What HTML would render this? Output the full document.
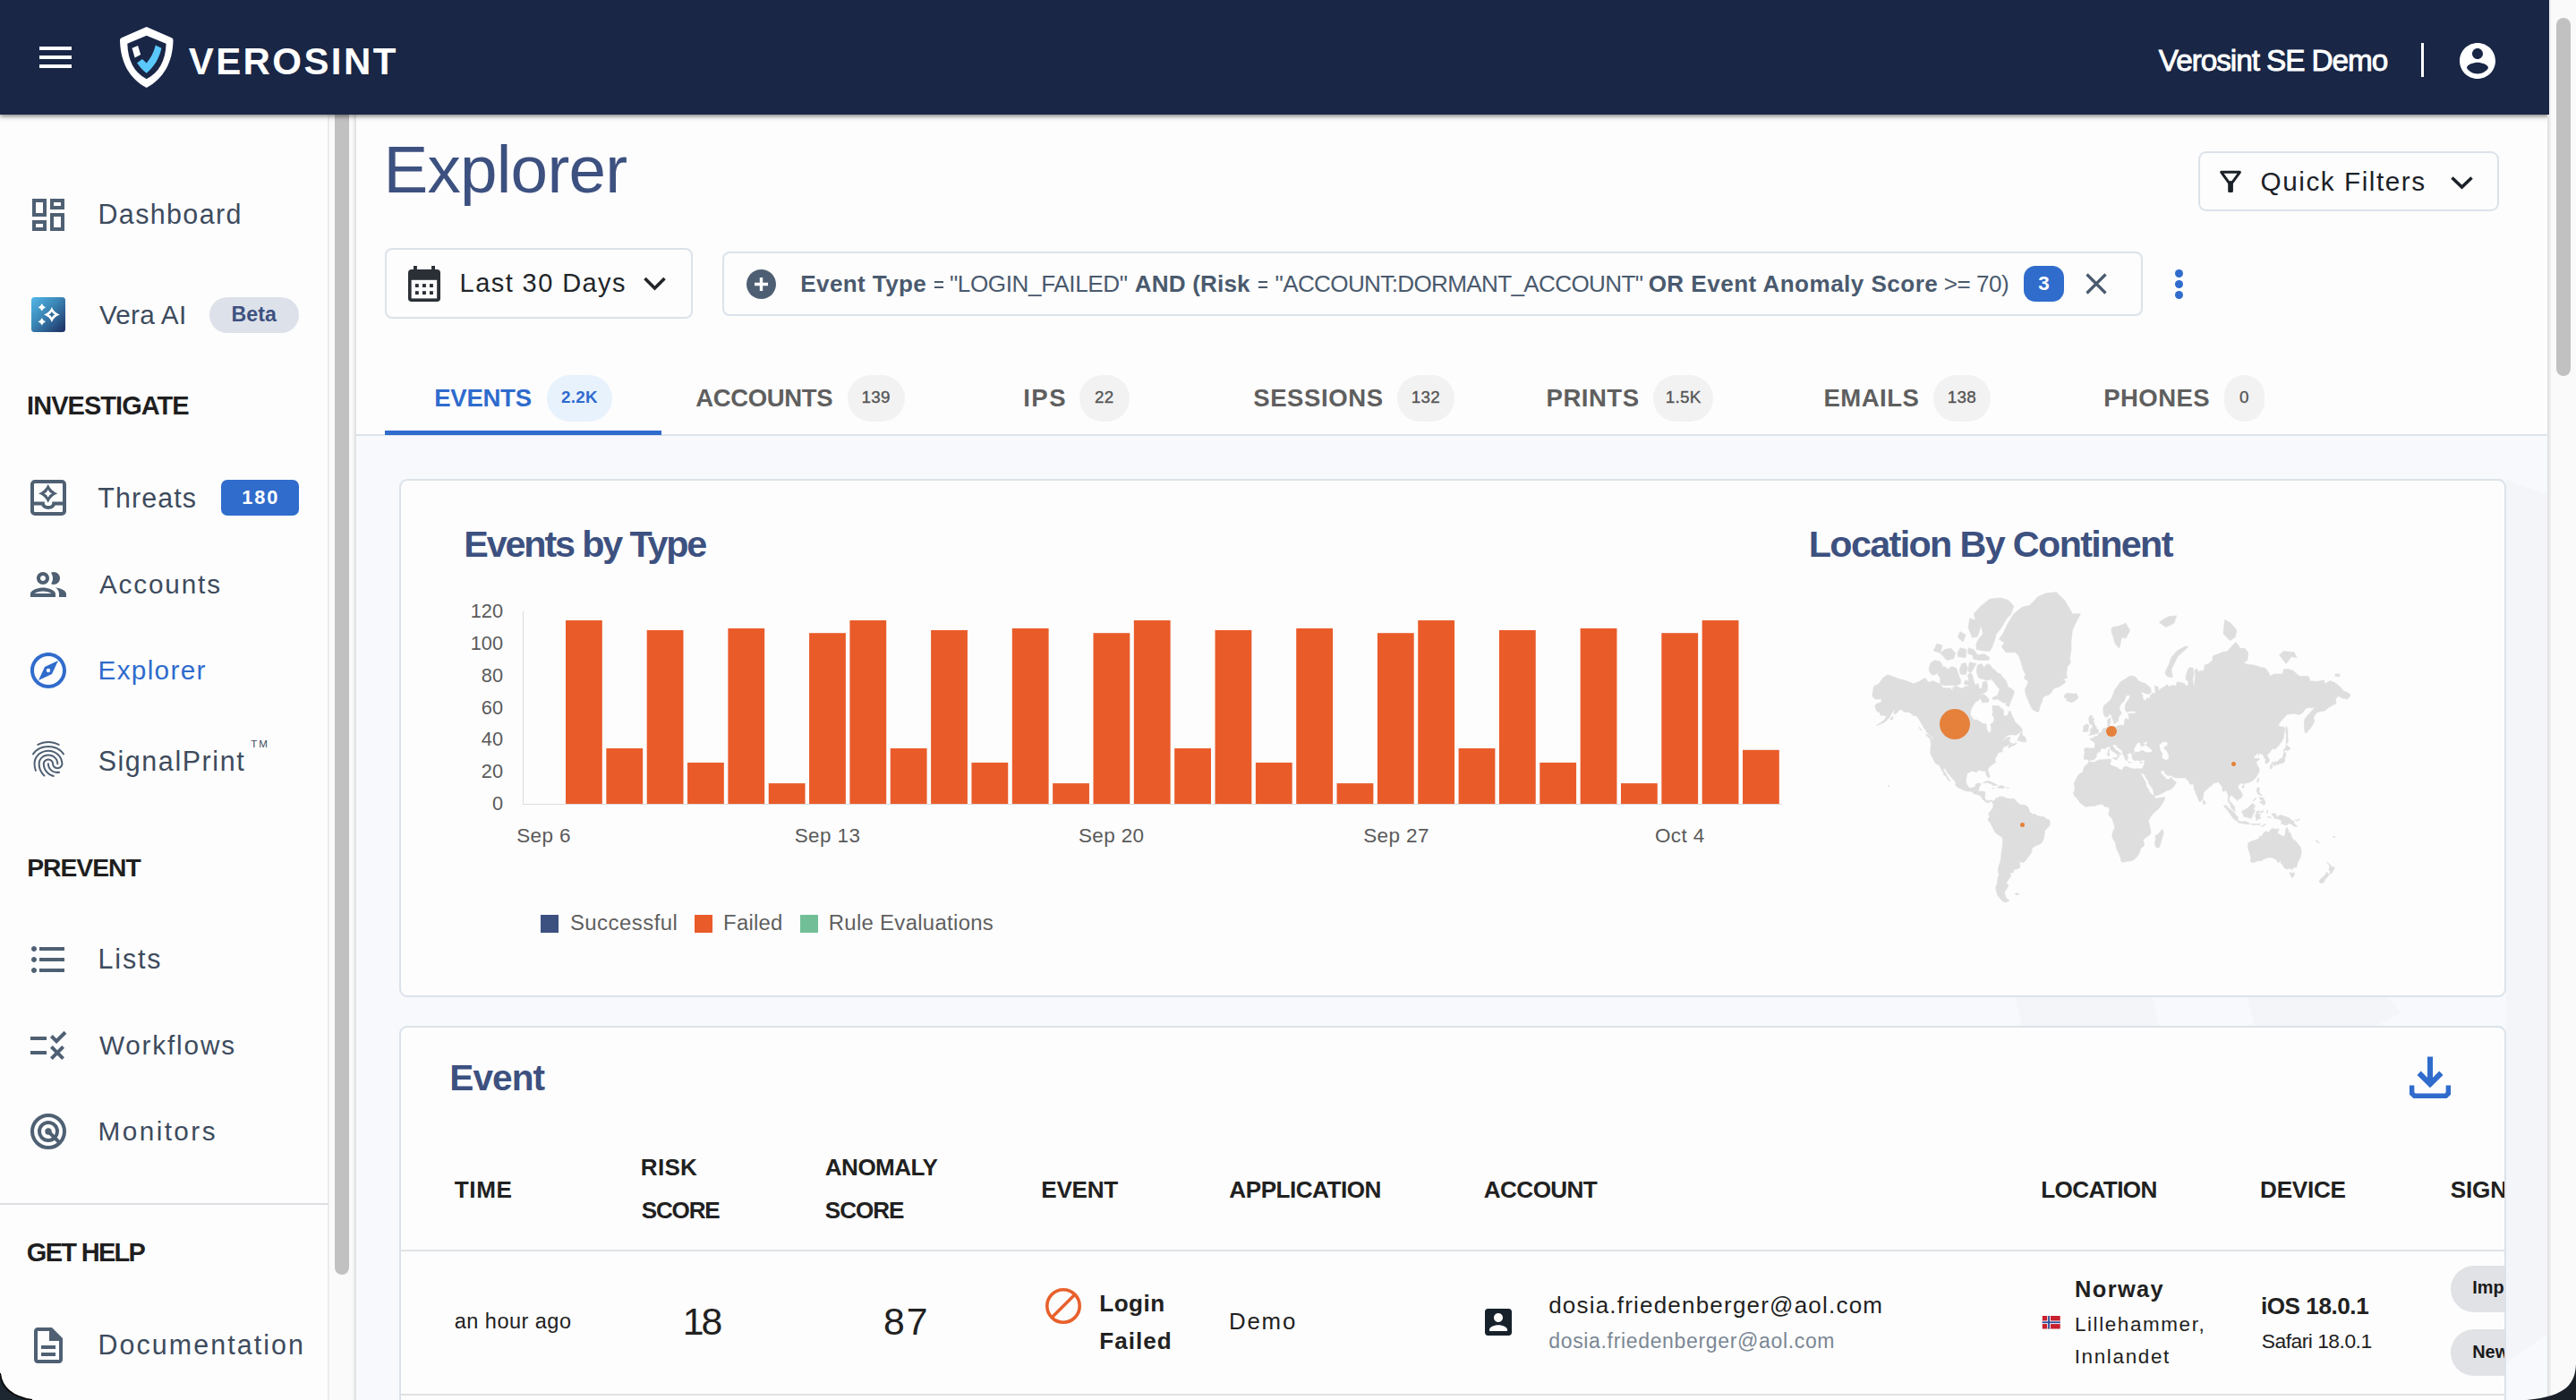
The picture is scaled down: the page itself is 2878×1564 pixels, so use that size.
<!DOCTYPE html>
<html><head><meta charset="utf-8"><title>Explorer</title>
<style>
html,body{margin:0;padding:0;}
body{width:2878px;height:1564px;overflow:hidden;background:#fdfdfd;font-family:"Liberation Sans",sans-serif;position:relative;}
.t{position:absolute;white-space:pre;line-height:1;font-family:"Liberation Sans",sans-serif;}
.b{position:absolute;box-sizing:border-box;}
</style></head><body>
<div class="b" style="left:397px;top:128px;width:2451px;height:359px;background:#fdfdfd;"></div>
<div class="b" style="left:397px;top:487px;width:2451px;height:1077px;background:#f7f9fc;"></div>
<div class="b" style="left:397px;top:485px;width:2451px;height:2px;background:#dde3ea;"></div>
<svg class="b" style="left:397px;top:487px;" width="2451" height="1077" viewBox="0 0 2451 1077"><g fill="#f3f5f8"><path d="M1855,627 L2007,627 L2015,659 L1862,659 Z"/><path d="M2114,627 L2271,627 L2285,644 L2258,659 L2122,659 Z"/><path d="M2403,49 L2449,66 L2449,1003 L2403,1035 Z"/></g></svg>
<div class="t" style="left:428.38px;top:151.82px;font-size:74.64px;font-weight:400;color:#3d5180;letter-spacing:-0.734px;">Explorer</div>
<div class="b" style="left:2456px;top:169px;width:336px;height:67px;border:2px solid #dbe2ea;border-radius:9px;background:#fdfdfd;"></div>
<svg class="b" style="left:2478px;top:189px;" width="28" height="28" viewBox="0 0 28 28"><path d="M3.700,3.300 H24.400 L16,14.800 H12.100 Z" fill="none" stroke="#1b2128" stroke-width="3" stroke-linejoin="round"/><rect x="11.200" y="13.500" width="5.700" height="12.400" rx="1.500" fill="#1b2128"/></svg>
<div class="t" style="left:2525.60px;top:187.85px;font-size:29.71px;font-weight:400;color:#1b2128;letter-spacing:1.533px;">Quick Filters</div>
<svg class="b" style="left:2736px;top:194px;" width="30" height="20" viewBox="0 0 30 20"><path d="M3.500,4.500 L14.500,15 L25.500,4.500" fill="none" stroke="#1b2128" stroke-width="3.600"/></svg>
<div class="b" style="left:430px;top:277px;width:344px;height:79px;border:2px solid #dbe2ea;border-radius:8px;background:#fdfdfd;"></div>
<svg class="b" style="left:456px;top:297px;" width="36" height="40" viewBox="0 0 36 40"><rect x="0" y="4" width="36" height="36" rx="3.800" fill="#2b3036"/>
<rect x="6" y="0" width="3.900" height="7" fill="#2b3036"/><rect x="26.100" y="0" width="3.900" height="7" fill="#2b3036"/>
<rect x="3.650" y="15.800" width="28.500" height="20.600" fill="#fdfdfd"/>
<g fill="#2b3036"><rect x="7.900" y="20.100" width="3.900" height="3.900"/><rect x="16" y="20.100" width="3.900" height="3.900"/><rect x="24" y="20.100" width="3.900" height="3.900"/>
<rect x="7.900" y="28.150" width="3.900" height="3.900"/><rect x="16" y="28.150" width="3.900" height="3.900"/><rect x="24" y="28.150" width="3.900" height="3.900"/></g></svg>
<div class="t" style="left:513.62px;top:302.46px;font-size:28.99px;font-weight:400;color:#212529;letter-spacing:1.433px;">Last 30 Days</div>
<svg class="b" style="left:717px;top:306px;" width="30" height="22" viewBox="0 0 30 22"><path d="M3.500,5 L14.500,16 L25.500,5" fill="none" stroke="#212529" stroke-width="3.600"/></svg>
<div class="b" style="left:807px;top:280.5px;width:1586.5px;height:72px;border:2px solid #dbe2ea;border-radius:8px;background:#fdfdfd;"></div>
<svg class="b" style="left:834px;top:300.5px;" width="33" height="33" viewBox="0 0 33 33"><circle cx="16.500" cy="16.500" r="16.500" fill="#4f5f73"/><path d="M16.500,9 V24 M9,16.500 H24" stroke="#fff" stroke-width="3.400"/></svg>
<div class="t" style="left:894.28px;top:303.92px;font-size:26.09px;font-weight:700;color:#4a5a6e;letter-spacing:0.374px;">Event Type</div>
<div class="b" style="left:1044px;top:313.5px;width:9.6px;height:2px;background:#4a5a6e;"></div>
<div class="b" style="left:1044px;top:320px;width:9.6px;height:2px;background:#4a5a6e;"></div>
<div class="t" style="left:1060.90px;top:303.92px;font-size:26.09px;font-weight:400;color:#4a5a6e;letter-spacing:-0.378px;">"LOGIN_FAILED"</div>
<div class="t" style="left:1267.87px;top:303.92px;font-size:26.09px;font-weight:700;color:#4a5a6e;letter-spacing:0.151px;">AND (Risk</div>
<div class="b" style="left:1406px;top:313.5px;width:9.6px;height:2px;background:#4a5a6e;"></div>
<div class="b" style="left:1406px;top:320px;width:9.6px;height:2px;background:#4a5a6e;"></div>
<div class="t" style="left:1424.60px;top:303.92px;font-size:26.09px;font-weight:400;color:#4a5a6e;letter-spacing:-0.656px;">"ACCOUNT:DORMANT_ACCOUNT"</div>
<div class="t" style="left:1841.63px;top:303.92px;font-size:26.09px;font-weight:700;color:#4a5a6e;letter-spacing:0.459px;">OR Event Anomaly Score</div>
<div class="t" style="left:2171.72px;top:303.92px;font-size:26.09px;font-weight:400;color:#4a5a6e;letter-spacing:-0.504px;">&gt;= 70)</div>
<div class="b" style="left:2261px;top:297px;width:45px;height:40px;background:#306ccc;border-radius:13px;"></div>
<div class="t" style="left:1983.50px;width:600px;text-align:center;top:305.98px;font-size:22.46px;font-weight:700;color:#fff;letter-spacing:0px;">3</div>
<svg class="b" style="left:2329px;top:304px;" width="26" height="26" viewBox="0 0 26 26"><path d="M2.500,2.500 L23.500,23.500 M23.500,2.500 L2.500,23.500" stroke="#4a5a6e" stroke-width="3.200"/></svg>
<div class="b" style="left:2429.5px;top:300.5px;width:9px;height:9px;background:#306ccc;border-radius:50%;"></div>
<div class="b" style="left:2429.5px;top:312.5px;width:9px;height:9px;background:#306ccc;border-radius:50%;"></div>
<div class="b" style="left:2429.5px;top:324.5px;width:9px;height:9px;background:#306ccc;border-radius:50%;"></div>
<div class="t" style="left:485.18px;top:431.19px;font-size:27.54px;font-weight:700;color:#2f6bcd;letter-spacing:-0.256px;">EVENTS</div>
<div class="b" style="left:611px;top:419px;width:73px;height:51.5px;background:#e8f2fd;border-radius:26px;"></div>
<div class="t" style="left:347.50px;width:600px;text-align:center;top:435.05px;font-size:18.84px;font-weight:700;color:#2f6bcd;letter-spacing:0.3px;">2.2K</div>
<div class="t" style="left:777.34px;top:431.19px;font-size:27.54px;font-weight:700;color:#5f5f5f;letter-spacing:-0.402px;">ACCOUNTS</div>
<div class="b" style="left:947px;top:419px;width:63.5px;height:51.5px;background:#f2f2f2;border-radius:26px;"></div>
<div class="t" style="left:678.75px;width:600px;text-align:center;top:435.05px;font-size:18.84px;font-weight:400;color:#555;letter-spacing:0.3px;-webkit-text-stroke:0.35px #555;">139</div>
<div class="t" style="left:1143.18px;top:431.19px;font-size:27.54px;font-weight:700;color:#5f5f5f;letter-spacing:1.501px;">IPS</div>
<div class="b" style="left:1206px;top:419px;width:55.700000000000045px;height:51.5px;background:#f2f2f2;border-radius:26px;"></div>
<div class="t" style="left:933.85px;width:600px;text-align:center;top:435.05px;font-size:18.84px;font-weight:400;color:#555;letter-spacing:0.3px;-webkit-text-stroke:0.35px #555;">22</div>
<div class="t" style="left:1400.23px;top:431.19px;font-size:27.54px;font-weight:700;color:#5f5f5f;letter-spacing:0.579px;">SESSIONS</div>
<div class="b" style="left:1561px;top:419px;width:64px;height:51.5px;background:#f2f2f2;border-radius:26px;"></div>
<div class="t" style="left:1293.00px;width:600px;text-align:center;top:435.05px;font-size:18.84px;font-weight:400;color:#555;letter-spacing:0.3px;-webkit-text-stroke:0.35px #555;">132</div>
<div class="t" style="left:1727.58px;top:431.19px;font-size:27.54px;font-weight:700;color:#5f5f5f;letter-spacing:0.503px;">PRINTS</div>
<div class="b" style="left:1847px;top:419px;width:67.40000000000009px;height:51.5px;background:#f2f2f2;border-radius:26px;"></div>
<div class="t" style="left:1580.70px;width:600px;text-align:center;top:435.05px;font-size:18.84px;font-weight:400;color:#555;letter-spacing:0.3px;-webkit-text-stroke:0.35px #555;">1.5K</div>
<div class="t" style="left:2037.58px;top:431.19px;font-size:27.54px;font-weight:700;color:#5f5f5f;letter-spacing:0.432px;">EMAILS</div>
<div class="b" style="left:2160px;top:419px;width:64px;height:51.5px;background:#f2f2f2;border-radius:26px;"></div>
<div class="t" style="left:1892.00px;width:600px;text-align:center;top:435.05px;font-size:18.84px;font-weight:400;color:#555;letter-spacing:0.3px;-webkit-text-stroke:0.35px #555;">138</div>
<div class="t" style="left:2350.18px;top:431.19px;font-size:27.54px;font-weight:700;color:#5f5f5f;letter-spacing:0.441px;">PHONES</div>
<div class="b" style="left:2485px;top:419px;width:45px;height:51.5px;background:#f2f2f2;border-radius:26px;"></div>
<div class="t" style="left:2207.50px;width:600px;text-align:center;top:435.05px;font-size:18.84px;font-weight:400;color:#555;letter-spacing:0.3px;-webkit-text-stroke:0.35px #555;">0</div>
<div class="b" style="left:430px;top:481px;width:309px;height:4.5px;background:#2f6bcd;"></div>
<div class="b" style="left:446px;top:535px;width:2354px;height:579px;border:2px solid #dbe2ea;border-radius:9px;background:#fdfdfd;"></div>
<div class="t" style="left:518.27px;top:588.04px;font-size:41.30px;font-weight:700;color:#3d5180;letter-spacing:-2.140px;">Events by Type</div>
<div class="t" style="left:2020.77px;top:588.04px;font-size:41.30px;font-weight:700;color:#3d5180;letter-spacing:-1.642px;">Location By Continent</div>
<div class="t" style="left:-38.00px;width:600px;text-align:right;top:887.10px;font-size:21.74px;font-weight:400;color:#5a5a5a;letter-spacing:0px;">0</div>
<div class="t" style="left:-38.00px;width:600px;text-align:right;top:851.26px;font-size:21.74px;font-weight:400;color:#5a5a5a;letter-spacing:0px;">20</div>
<div class="t" style="left:-38.00px;width:600px;text-align:right;top:815.43px;font-size:21.74px;font-weight:400;color:#5a5a5a;letter-spacing:0px;">40</div>
<div class="t" style="left:-38.00px;width:600px;text-align:right;top:779.60px;font-size:21.74px;font-weight:400;color:#5a5a5a;letter-spacing:0px;">60</div>
<div class="t" style="left:-38.00px;width:600px;text-align:right;top:743.76px;font-size:21.74px;font-weight:400;color:#5a5a5a;letter-spacing:0px;">80</div>
<div class="t" style="left:-38.00px;width:600px;text-align:right;top:707.93px;font-size:21.74px;font-weight:400;color:#5a5a5a;letter-spacing:0px;">100</div>
<div class="t" style="left:-38.00px;width:600px;text-align:right;top:672.10px;font-size:21.74px;font-weight:400;color:#5a5a5a;letter-spacing:0px;">120</div>
<div class="b" style="left:583.5px;top:683px;width:1.5px;height:216px;background:#dcdcdc;"></div>
<div class="b" style="left:583.5px;top:897.5px;width:1407px;height:1.5px;background:#dcdcdc;"></div>
<svg class="b" style="left:440px;top:660px;" width="1600" height="240" viewBox="0 0 1600 240"><g fill="#ea5b2a"><rect x="192.00" y="33.03" width="40.800" height="204.97"/><rect x="237.35" y="176.01" width="40.800" height="61.99"/><rect x="282.69" y="43.96" width="40.800" height="194.04"/><rect x="328.03" y="191.95" width="40.800" height="46.05"/><rect x="373.38" y="41.99" width="40.800" height="196.01"/><rect x="418.73" y="215.07" width="40.800" height="22.93"/><rect x="464.07" y="47.19" width="40.800" height="190.81"/><rect x="509.41" y="33.03" width="40.800" height="204.97"/><rect x="554.76" y="176.01" width="40.800" height="61.99"/><rect x="600.11" y="43.96" width="40.800" height="194.04"/><rect x="645.45" y="191.95" width="40.800" height="46.05"/><rect x="690.80" y="41.99" width="40.800" height="196.01"/><rect x="736.14" y="215.07" width="40.800" height="22.93"/><rect x="781.49" y="47.19" width="40.800" height="190.81"/><rect x="826.83" y="33.03" width="40.800" height="204.97"/><rect x="872.17" y="176.01" width="40.800" height="61.99"/><rect x="917.52" y="43.96" width="40.800" height="194.04"/><rect x="962.87" y="191.95" width="40.800" height="46.05"/><rect x="1008.21" y="41.99" width="40.800" height="196.01"/><rect x="1053.55" y="215.07" width="40.800" height="22.93"/><rect x="1098.90" y="47.19" width="40.800" height="190.81"/><rect x="1144.24" y="33.03" width="40.800" height="204.97"/><rect x="1189.59" y="176.01" width="40.800" height="61.99"/><rect x="1234.93" y="43.96" width="40.800" height="194.04"/><rect x="1280.28" y="191.95" width="40.800" height="46.05"/><rect x="1325.62" y="41.99" width="40.800" height="196.01"/><rect x="1370.97" y="215.07" width="40.800" height="22.93"/><rect x="1416.32" y="47.19" width="40.800" height="190.81"/><rect x="1461.66" y="33.03" width="40.800" height="204.97"/><rect x="1507.00" y="177.80" width="40.800" height="60.20"/></g></svg>
<div class="t" style="left:307.50px;width:600px;text-align:center;top:923.48px;font-size:22.46px;font-weight:400;color:#5a5a5a;letter-spacing:0.4px;">Sep 6</div>
<div class="t" style="left:624.50px;width:600px;text-align:center;top:923.48px;font-size:22.46px;font-weight:400;color:#5a5a5a;letter-spacing:0.4px;">Sep 13</div>
<div class="t" style="left:941.70px;width:600px;text-align:center;top:923.48px;font-size:22.46px;font-weight:400;color:#5a5a5a;letter-spacing:0.4px;">Sep 20</div>
<div class="t" style="left:1260.00px;width:600px;text-align:center;top:923.48px;font-size:22.46px;font-weight:400;color:#5a5a5a;letter-spacing:0.4px;">Sep 27</div>
<div class="t" style="left:1576.75px;width:600px;text-align:center;top:923.48px;font-size:22.46px;font-weight:400;color:#5a5a5a;letter-spacing:0.4px;">Oct 4</div>
<div class="b" style="left:604.2px;top:1022px;width:20px;height:20px;background:#3d5180;"></div>
<div class="t" style="left:636.92px;top:1018.96px;font-size:23.91px;font-weight:400;color:#5f5f5f;letter-spacing:0.482px;">Successful</div>
<div class="b" style="left:776.4px;top:1022px;width:20px;height:20px;background:#ea5b2a;"></div>
<div class="t" style="left:808.04px;top:1018.96px;font-size:23.91px;font-weight:400;color:#5f5f5f;letter-spacing:0.250px;">Failed</div>
<div class="b" style="left:894px;top:1022px;width:20px;height:20px;background:#72bf97;"></div>
<div class="t" style="left:925.74px;top:1018.96px;font-size:23.91px;font-weight:400;color:#5f5f5f;letter-spacing:0.312px;">Rule Evaluations</div>
<svg class="b" style="left:2070px;top:640px;" width="580" height="400" viewBox="0 0 580 400"><path d="M21.7,137.1L23.5,126.8L29.2,123.9L33.6,117.5L38.8,113.8L45.6,116.1L51.5,118.4L57.5,119.7L62.0,121.4L67.9,123.9L70.9,122.7L73.9,121.4L78.4,118.8L81.4,117.5L83.6,121.4L86.6,122.3L88.8,120.5L93.3,122.3L97.8,124.3L100.8,128.4L105.2,128.8L109.0,128.4L111.2,131.9L111.9,128.0L115.7,126.4L120.1,128.8L123.1,128.8L126.1,126.4L129.1,127.2L129.8,121.8L128.4,114.3L131.3,111.0L133.6,114.3L135.1,121.0L137.3,126.0L139.5,123.1L141.8,130.0L144.0,128.8L145.5,121.8L149.2,121.0L150.7,126.0L150.0,131.9L146.3,134.5L144.0,134.5L142.5,139.2L141.0,142.0L137.3,144.1L134.3,148.3L132.1,152.4L131.3,155.4L131.3,159.0L133.6,161.2L134.3,164.0L138.0,164.0L141.0,165.4L144.8,168.0L149.2,169.1L149.7,174.4L150.7,176.9L152.2,178.8L154.0,178.1L154.8,174.9L154.5,171.2L153.4,169.3L156.7,167.2L158.0,164.0L157.4,160.7L155.5,158.7L156.7,155.4L155.9,150.9L156.2,148.0L159.7,148.6L162.7,148.3L165.6,151.2L167.9,152.4L168.6,156.0L168.2,159.0L170.9,160.1L173.1,159.0L174.6,154.5L176.1,154.5L177.6,159.0L179.8,162.6L181.3,166.7L182.8,168.0L185.0,169.9L186.8,171.4L188.8,174.4L189.1,176.4L187.6,178.1L185.0,179.3L182.8,181.2L179.8,180.9L176.1,180.9L173.1,181.2L170.9,183.5L168.2,186.2L166.7,188.4L168.2,187.7L170.6,185.0L173.8,183.5L176.1,183.9L175.6,185.9L173.8,186.2L175.3,187.9L175.8,190.1L177.6,190.5L179.8,191.0L181.3,191.2L182.5,188.8L182.9,190.8L180.6,192.5L177.6,193.5L174.9,195.6L173.5,194.8L175.3,192.2L176.1,191.2L173.8,192.2L172.1,193.1L169.7,194.1L167.9,195.2L166.8,197.2L166.7,198.8L167.9,199.2L167.4,199.6L165.6,200.0L163.4,200.6L161.9,201.6L161.6,203.6L160.4,204.7L159.5,206.6L158.9,208.5L159.2,210.4L159.7,211.8L157.7,212.9L155.9,214.2L154.2,215.4L152.2,217.0L151.2,218.8L150.9,220.4L151.8,223.1L152.5,225.3L153.0,227.0L152.5,229.0L151.5,229.1L150.3,227.5L148.9,224.8L148.8,222.8L147.3,221.1L145.5,221.6L143.6,220.4L141.0,220.4L138.9,220.7L139.2,222.4L137.3,222.4L135.1,221.7L132.4,221.6L130.6,222.4L128.4,224.0L127.2,225.6L127.2,227.8L126.6,230.3L126.4,233.5L127.3,235.9L128.5,238.3L129.8,239.6L131.6,240.4L134.3,239.8L136.3,239.3L137.2,237.1L137.7,235.8L140.3,235.1L142.5,235.1L142.8,236.7L141.8,238.3L141.3,240.2L140.6,241.5L140.0,243.8L141.8,244.1L144.0,244.0L146.3,244.1L148.0,245.4L147.7,247.7L147.6,250.0L147.3,251.5L148.5,253.0L149.7,254.2L151.2,254.8L153.0,254.1L154.5,253.8L156.2,254.7L157.0,255.1L156.2,256.9L155.4,256.0L154.0,254.7L152.5,255.7L152.2,257.1L150.4,256.6L148.6,255.7L147.4,255.1L145.8,253.5L144.3,252.2L144.0,250.7L142.1,248.7L140.3,248.1L138.0,247.2L135.8,246.9L134.3,245.7L132.1,243.7L129.8,244.1L127.9,244.1L125.4,243.2L123.1,242.3L120.4,241.0L117.9,239.9L115.7,238.3L114.8,236.7L115.2,235.1L114.2,233.1L112.7,231.1L110.5,229.0L109.0,227.0L107.5,225.3L106.0,223.6L104.5,221.6L103.4,219.0L101.1,217.9L101.4,220.7L103.0,222.8L104.2,224.8L105.5,227.0L106.7,229.1L107.8,230.8L109.0,232.2L108.2,232.9L107.0,231.8L105.2,229.8L104.8,227.8L103.0,226.5L100.8,224.8L101.9,223.4L100.0,221.4L98.5,218.8L97.5,216.5L95.7,214.2L94.0,213.5L92.4,212.9L91.1,210.4L90.0,208.5L89.4,206.8L88.1,205.1L87.5,203.2L86.7,202.0L87.0,199.2L86.6,197.2L87.2,193.7L87.3,190.1L86.3,185.5L88.5,185.5L89.4,187.3L89.6,184.4L88.1,182.8L85.8,180.5L82.9,178.6L81.4,175.7L79.1,172.7L77.9,170.1L76.1,167.5L74.6,164.6L72.4,161.2L70.2,159.2L67.9,159.5L65.7,157.5L63.5,156.0L60.5,155.4L57.0,155.1L54.5,152.7L51.5,153.0L50.3,155.4L47.8,157.5L45.9,157.8L46.3,153.9L48.5,151.8L46.0,152.7L44.4,155.4L42.9,157.8L42.1,159.8L39.9,162.4L38.1,164.6L35.9,166.4L33.2,168.0L30.3,169.1L26.5,170.4L29.2,168.6L32.1,166.7L34.4,165.1L36.6,162.1L37.8,159.0L35.4,159.8L32.9,159.0L30.6,159.2L30.6,155.7L27.7,155.4L25.7,152.4L24.7,148.6L26.5,146.1L29.2,145.4L32.1,143.7L32.1,140.6L29.2,141.0L26.2,141.0L23.9,140.3ZM180.6,133.0L178.3,139.2L176.1,144.4L174.6,149.3L170.9,147.7L172.4,144.4L169.4,145.4L165.6,143.4L161.9,141.0L156.7,141.7L155.9,139.2L161.2,137.5L162.7,133.8L164.2,130.0L161.2,126.8L157.4,121.8L154.5,118.8L150.0,120.1L145.5,118.8L141.0,117.5L138.8,112.9L138.3,108.1L139.5,103.0L144.0,101.4L146.3,105.5L150.0,101.9L153.0,102.4L155.9,106.6L158.9,108.5L161.2,111.5L164.9,112.9L167.9,117.0L170.9,119.7L172.4,123.9L173.8,128.0L176.8,128.8L179.1,131.1ZM97.8,123.9L103.0,126.0L108.2,125.6L111.2,125.6L115.7,126.0L120.1,123.9L120.9,120.5L118.7,115.2L115.7,106.6L110.5,104.5L106.7,107.6L102.2,104.5L97.0,106.0L94.8,112.9L97.8,117.5ZM85.8,110.5L88.8,114.3L93.3,112.9L97.8,108.1L100.0,103.0L97.8,99.2L91.8,97.5L87.3,100.3L85.1,106.6ZM138.0,85.6L145.5,86.9L153.0,87.5L155.9,82.3L158.9,74.0L160.4,68.0L164.9,63.1L170.9,52.6L176.8,45.8L179.8,37.3L173.8,30.4L164.9,27.9L153.0,29.2L144.0,36.2L135.1,45.8L138.0,55.4L144.0,61.5L145.5,68.0L141.0,73.3L138.0,79.0ZM129.1,83.7L135.1,85.6L139.5,91.8L147.0,90.6L153.0,94.7L151.5,97.5L141.0,97.5L135.1,96.4L133.6,91.8L128.4,90.0ZM129.1,61.5L133.6,72.5L139.5,71.0L142.5,61.5L136.6,52.6L130.6,50.7ZM97.8,90.0L105.2,97.5L112.7,95.8L114.9,90.0L109.7,84.3L102.2,85.6ZM120.1,112.9L126.1,113.8L128.4,106.6L126.1,100.3L121.6,101.4L119.4,108.1ZM129.1,110.5L132.8,110.5L138.0,101.4L130.6,99.7L129.1,105.5ZM117.2,93.5L126.1,94.7L126.9,85.6L120.1,83.7L117.2,88.7ZM117.2,71.8L123.1,76.9L126.1,69.5L120.1,65.6ZM142.5,139.2L144.8,145.1L148.5,144.4L151.5,144.4L152.2,141.0L147.7,136.4L144.8,135.6ZM123.9,123.9L129.1,125.2L129.8,121.4L126.1,119.7ZM90.3,86.9L97.8,89.4L100.0,81.0L94.0,79.0ZM183.8,187.1L188.8,188.6L193.2,189.0L193.7,186.8L192.5,183.5L189.5,181.6L189.2,177.8L187.0,180.0L185.3,183.9ZM80.9,180.0L85.1,184.4L88.1,185.3L85.8,181.2ZM41.8,164.0L44.8,163.5L44.8,160.7L42.6,161.8ZM73.9,171.9L76.1,174.4L76.6,176.4L74.6,173.7ZM145.5,234.5L148.5,232.9L152.2,232.6L157.4,234.8L161.6,237.2L156.7,237.7L155.9,236.4L150.7,234.3L147.0,234.7ZM161.3,240.1L164.2,237.7L167.9,237.9L170.3,239.8L166.4,240.7L164.9,240.4ZM155.5,240.1L158.5,240.4L157.4,241.0ZM172.1,239.9L174.3,240.1L173.8,240.9L172.1,240.7ZM163.4,74.0L167.9,68.0L172.4,58.0L179.8,45.8L188.8,38.5L197.7,36.2L206.7,26.7L215.6,22.8L227.5,21.5L236.5,30.4L242.5,40.6L245.4,45.8L254.4,45.8L248.4,57.2L245.4,64.0L244.0,75.5L244.0,85.6L242.5,94.7L243.2,100.3L239.5,105.5L238.7,112.9L239.5,117.5L235.0,118.4L238.0,121.8L234.3,124.8L230.5,127.2L224.6,129.2L221.6,133.8L218.6,136.4L214.9,137.5L212.6,139.2L211.1,144.4L208.9,149.3L208.2,153.9L206.7,155.7L204.4,154.5L200.7,152.4L197.7,146.7L195.5,141.0L193.2,135.6L192.5,130.0L194.7,125.6L196.2,121.0L191.0,117.5L193.2,113.8L190.3,108.1L188.0,100.3L185.8,93.0L181.3,88.7L175.3,88.7L170.9,88.7L166.4,82.3L169.4,78.3ZM236.1,137.1L239.5,134.2L245.4,134.9L249.9,134.9L252.0,139.2L249.9,141.7L244.7,144.7L241.0,143.4L238.7,142.7L239.5,139.9L236.5,139.6ZM157.0,255.1L158.9,253.8L159.7,251.9L161.9,251.2L164.2,250.0L165.9,249.4L165.2,251.2L167.1,250.3L168.6,249.8L170.4,251.8L173.8,252.1L176.8,252.6L179.8,251.9L181.3,253.3L182.8,255.3L185.0,257.5L187.3,259.0L190.3,259.2L192.5,259.6L194.7,260.8L195.9,262.0L197.0,265.0L197.7,267.3L200.0,268.7L200.7,269.5L203.7,269.5L206.7,271.7L210.4,272.3L213.4,272.5L216.4,274.9L219.6,275.9L220.4,278.8L219.8,282.2L217.1,285.3L214.9,287.6L214.1,291.4L213.8,295.3L212.6,298.5L211.1,301.7L208.2,303.3L205.2,304.6L202.2,306.0L200.0,308.2L199.7,312.0L197.3,315.8L194.7,319.0L192.5,322.0L190.3,323.4L187.3,322.9L185.2,322.0L187.0,326.2L186.4,329.4L182.8,331.1L179.5,331.3L179.4,334.8L175.3,335.2L176.8,338.2L174.9,341.2L172.4,344.4L171.6,346.5L173.8,348.7L173.1,351.0L170.9,354.4L169.4,356.7L170.1,359.9L170.9,362.8L173.1,364.8L175.0,365.9L173.1,367.2L170.1,368.0L167.1,366.7L164.9,364.1L161.9,360.3L160.4,355.5L159.7,351.0L161.2,347.2L161.9,342.3L163.4,337.2L162.2,333.2L162.7,329.4L163.4,326.6L164.9,322.9L165.6,318.4L165.8,314.9L166.4,310.7L167.1,306.5L167.4,301.7L167.6,297.7L167.1,295.8L165.6,294.5L162.7,292.7L159.7,290.6L158.5,288.8L157.1,286.0L155.2,282.2L153.7,279.2L151.5,277.0L151.0,274.7L152.5,273.1L153.0,271.7L151.5,270.2L152.2,268.7L153.0,266.8L154.5,265.8L155.2,264.3L156.7,262.3L157.0,259.8L156.7,257.5L156.2,256.8ZM181.3,357.9L185.8,357.9L184.3,359.9L182.1,359.6ZM263.5,210.7L269.3,211.8L273.8,209.4L276.8,208.7L282.7,208.5L287.2,208.0L288.7,208.7L288.0,211.3L287.2,213.7L288.7,214.9L291.7,216.0L295.1,217.2L297.7,219.3L301.4,220.4L302.1,217.6L305.1,216.0L309.6,217.9L313.3,219.0L317.1,218.8L320.5,219.0L323.3,218.8L324.4,221.9L323.5,224.6L321.8,223.1L320.9,221.1L320.9,222.8L322.3,225.3L323.8,227.8L325.6,231.1L327.5,234.3L327.9,238.3L329.7,240.7L331.5,244.6L334.2,247.7L336.9,249.2L336.9,250.7L339.4,252.2L342.4,251.3L345.4,251.0L348.7,250.3L348.4,252.4L346.9,256.0L343.9,260.5L340.9,264.3L337.9,266.5L335.0,269.5L333.2,271.7L331.2,275.0L330.2,277.7L331.2,280.0L331.7,283.0L332.7,286.8L332.9,290.6L330.5,293.7L327.3,295.3L324.5,298.5L325.3,301.7L325.3,304.9L321.5,307.9L321.2,309.9L320.0,313.2L317.8,316.7L314.8,319.8L311.8,321.6L308.1,322.0L305.1,322.3L302.1,323.4L299.7,322.3L299.4,319.3L298.1,315.8L296.9,312.6L295.0,309.0L293.9,304.9L293.6,301.7L291.7,298.5L289.9,295.3L289.9,292.2L290.9,288.3L292.9,284.5L292.0,281.5L290.6,277.0L290.2,275.2L288.7,273.5L286.5,271.3L285.7,269.2L286.5,266.5L286.9,263.5L285.7,261.6L282.7,261.4L280.5,260.2L279.0,258.6L276.0,258.6L273.8,259.2L270.8,260.2L267.8,260.4L264.8,260.4L261.1,261.4L258.9,260.5L255.9,258.1L253.7,256.8L252.5,254.5L250.7,252.2L249.6,250.7L247.4,249.2L247.2,247.2L246.2,245.8L247.7,243.8L248.0,240.7L248.1,238.3L246.9,235.9L248.0,233.5L249.2,231.1L250.7,227.8L252.9,225.0L255.1,223.6L257.4,221.9L257.8,219.3L259.6,215.3L262.2,214.0ZM345.8,286.0L347.3,291.4L346.1,294.5L344.6,299.3L342.7,306.2L339.7,307.4L337.5,304.1L337.6,300.9L338.4,297.7L337.9,293.7L340.9,291.9L343.9,288.8ZM258.9,208.5L258.1,205.3L259.2,200.8L258.6,196.8L260.4,195.4L264.1,195.8L267.8,196.0L269.6,196.0L270.5,193.7L270.5,190.5L269.0,188.4L265.6,186.6L265.3,185.0L267.8,184.4L269.9,184.8L269.6,182.3L271.6,183.2L272.6,182.3L274.5,181.2L274.7,179.5L276.0,179.0L277.5,178.3L278.6,176.9L279.3,174.4L280.5,173.4L282.7,173.2L284.5,172.9L285.1,170.9L284.7,168.0L284.5,164.6L285.1,163.5L288.0,162.1L287.7,165.4L288.4,166.7L286.9,168.8L286.9,170.4L288.4,171.9L289.9,171.4L292.4,170.9L293.6,172.2L296.9,170.6L299.9,170.1L301.8,170.9L303.6,168.8L303.6,164.6L304.8,162.4L305.9,162.4L307.4,164.0L308.5,163.2L308.5,160.4L307.4,157.8L310.3,156.9L314.1,156.9L317.3,155.7L315.6,154.8L311.1,154.2L306.3,155.7L304.1,153.0L304.4,147.7L305.9,144.4L309.3,139.9L310.0,137.5L307.8,136.4L305.1,137.5L304.1,141.0L302.9,143.4L299.9,146.1L298.1,149.3L298.0,153.0L299.9,155.4L300.3,157.2L298.4,159.0L296.9,161.8L296.6,165.4L294.7,166.4L293.6,168.0L291.4,168.3L291.4,165.6L289.9,162.6L289.0,159.8L288.0,157.5L286.5,158.4L284.7,161.0L282.7,161.2L280.7,159.0L279.9,155.4L279.8,150.9L280.5,148.3L282.7,146.7L285.0,144.4L287.2,142.7L289.5,139.2L290.9,135.6L292.4,131.1L294.7,128.0L296.9,124.8L299.2,121.8L302.1,119.7L305.1,118.4L308.1,115.7L311.1,115.2L314.1,115.2L317.1,117.5L318.5,119.7L317.1,121.0L320.0,120.5L322.3,122.3L326.0,123.1L329.7,126.0L332.7,128.8L333.5,132.7L332.0,134.9L329.0,135.3L324.5,133.4L321.5,133.0L323.8,136.4L324.2,141.0L327.5,142.7L328.7,139.6L332.0,140.6L332.0,137.5L335.0,134.2L337.9,134.9L337.9,128.8L337.2,126.0L340.9,127.2L341.7,131.9L343.9,129.6L346.9,128.0L351.4,124.8L352.9,127.2L357.3,125.6L361.1,126.4L362.5,121.8L367.8,122.7L370.8,123.9L372.2,126.0L375.2,126.0L374.5,120.5L372.2,119.7L372.2,114.3L374.5,108.1L376.7,105.5L380.4,106.6L380.9,113.8L379.7,119.7L380.7,124.8L381.9,128.0L381.9,121.8L382.7,115.2L381.9,109.5L384.2,106.6L385.7,110.5L388.7,109.5L392.4,109.0L393.1,103.0L397.6,101.4L402.1,97.5L402.1,93.0L406.6,91.2L412.5,88.7L418.5,87.5L423.0,82.3L427.9,77.6L430.4,80.3L432.7,84.3L437.9,84.3L441.6,88.7L440.9,97.5L436.4,100.3L440.1,101.9L442.4,102.4L448.3,103.0L455.8,105.5L461.0,106.6L464.7,111.5L466.2,115.2L470.7,112.9L475.2,112.9L480.4,112.9L481.1,108.1L485.6,107.6L491.6,109.0L496.1,112.9L499.8,115.7L505.0,115.2L509.5,116.1L511.0,121.0L514.0,121.0L518.4,121.4L522.9,120.5L526.6,119.7L527.4,123.9L533.3,120.5L537.8,122.3L540.8,124.3L545.3,128.0L548.3,131.9L552.7,133.8L555.7,135.6L555.7,137.5L552.7,141.0L546.8,139.9L542.3,137.5L539.3,141.0L540.1,146.1L536.3,147.7L531.9,150.2L527.4,153.9L522.9,154.8L518.4,156.0L516.2,159.0L514.7,161.8L515.7,165.9L514.0,169.3L511.0,173.9L508.4,176.9L506.0,179.3L504.6,175.7L504.4,169.3L504.7,164.0L506.5,161.2L509.5,157.8L513.2,153.9L516.2,149.3L512.5,150.9L509.5,150.2L505.8,151.5L502.8,156.0L499.0,158.4L493.8,157.2L488.6,157.5L484.9,158.4L481.1,162.6L478.2,165.9L475.2,170.1L478.2,171.9L481.1,171.9L483.1,174.4L481.9,179.3L481.1,185.0L478.9,188.8L475.9,192.7L472.2,196.8L469.2,196.4L467.4,198.2L465.8,200.8L463.7,202.8L462.5,203.8L464.0,205.7L465.3,208.5L465.2,211.1L462.9,212.6L460.9,213.1L461.0,210.4L461.3,207.6L459.2,206.6L459.1,203.8L457.7,202.8L454.3,201.6L453.2,204.7L453.7,202.2L452.8,201.0L449.8,204.2L448.0,205.1L449.1,207.2L452.0,207.2L455.0,208.1L452.8,209.4L450.6,211.7L452.0,214.9L454.0,218.4L454.0,221.1L453.5,223.6L451.8,226.1L450.6,228.6L448.3,230.4L446.1,232.7L442.8,233.9L439.4,234.8L437.1,235.5L436.7,237.1L435.9,235.1L433.4,235.0L431.5,236.7L430.1,238.6L431.2,241.2L433.4,243.8L435.2,246.9L435.3,250.0L433.4,251.8L431.6,252.6L429.4,254.8L428.6,253.0L426.7,252.1L425.2,250.0L423.0,248.7L421.8,247.8L421.2,250.7L420.3,253.8L421.9,256.0L423.4,257.8L425.2,259.3L426.5,261.3L426.7,263.8L427.7,265.9L426.5,266.1L423.7,264.0L422.2,261.3L421.8,258.6L419.7,256.0L418.9,253.8L419.5,250.7L419.2,247.7L418.0,244.6L417.0,242.6L414.8,244.1L413.0,243.5L413.0,239.9L411.8,237.5L409.5,235.1L408.8,233.2L406.6,234.3L404.3,234.7L402.1,235.6L401.3,237.5L399.1,238.3L396.9,240.7L394.6,243.0L392.1,244.6L391.9,247.7L391.3,250.7L390.9,252.6L389.0,254.7L387.9,255.9L386.4,254.2L385.4,250.7L383.9,247.7L382.7,244.6L381.2,240.7L380.9,237.5L380.6,235.6L377.5,236.3L375.2,233.9L376.7,233.1L374.5,231.9L372.7,230.3L371.5,228.8L367.8,229.0L364.0,229.1L360.3,228.8L357.8,228.1L357.0,226.1L354.3,226.6L352.1,226.5L349.9,225.0L348.1,222.8L346.9,220.7L345.1,220.7L343.9,221.9L344.6,224.0L346.6,226.1L347.2,228.1L348.4,228.3L348.8,227.6L349.3,230.1L351.1,230.8L353.6,230.6L356.1,227.8L356.6,229.8L358.1,231.4L360.3,233.1L361.5,233.9L360.0,236.7L358.5,239.1L356.6,240.7L354.3,242.3L350.6,243.3L346.9,245.4L343.2,247.4L339.4,248.7L337.3,248.9L336.4,247.2L336.0,244.6L335.4,242.3L333.5,239.1L330.9,235.9L330.2,232.7L327.9,229.5L326.3,226.1L324.2,224.0L324.5,221.9L323.5,218.8L324.5,216.2L325.7,213.1L326.0,210.4L326.3,209.1L323.8,209.1L320.8,210.2L318.1,208.9L315.6,209.8L313.3,208.9L311.8,206.1L312.3,203.8L311.4,202.8L312.6,201.8L315.6,201.6L315.9,200.4L319.3,200.2L322.3,198.8L324.8,198.8L326.7,200.2L329.7,200.8L332.7,200.8L334.4,199.6L334.2,197.6L332.0,195.8L329.7,193.9L327.9,192.7L327.0,192.0L329.0,190.5L329.7,188.4L327.5,188.8L324.8,189.9L324.5,191.2L326.7,192.2L325.0,192.9L322.6,193.9L321.1,191.4L322.3,190.5L320.0,189.5L318.2,189.7L316.8,191.6L316.3,192.7L315.1,194.8L314.1,196.8L313.8,198.8L314.8,199.8L315.6,200.4L313.3,201.0L311.4,202.0L311.1,201.0L308.8,201.2L307.8,202.8L306.3,202.0L306.3,204.0L307.1,204.9L308.1,206.6L306.9,207.0L306.6,207.8L306.9,209.4L305.9,209.4L304.7,208.9L303.9,207.0L303.6,205.5L302.4,203.6L301.2,201.8L301.4,199.4L299.9,197.8L298.0,196.4L295.9,195.2L294.7,193.3L293.6,192.2L292.7,192.2L292.7,191.2L290.8,191.8L290.6,193.7L292.6,195.6L293.5,197.8L296.2,199.0L296.2,200.0L298.1,200.8L299.9,202.4L299.6,203.2L297.7,201.8L297.1,203.2L297.8,204.7L296.9,205.9L296.2,206.8L295.7,206.3L296.2,204.7L295.4,202.8L293.9,201.6L292.4,200.4L290.6,199.4L288.7,198.0L287.7,196.2L287.2,194.8L285.4,193.9L284.2,195.0L283.5,195.2L282.0,196.6L279.8,196.2L278.3,195.8L277.1,196.8L277.1,198.2L275.6,200.0L273.5,200.8L272.3,202.8L271.9,204.2L272.6,205.3L271.3,207.0L269.6,208.5L268.6,209.1L265.6,209.1L264.2,210.2L263.1,209.4L262.6,208.5L261.1,208.1ZM263.8,181.6L267.1,180.9L270.8,180.0L274.2,179.0L274.5,175.2L272.6,174.4L272.0,171.9L270.1,169.3L269.3,166.7L268.6,165.4L269.6,162.4L267.1,162.1L267.8,159.5L264.8,159.5L263.6,162.6L264.1,166.7L265.1,169.3L267.5,169.6L267.8,171.9L267.8,173.4L265.6,173.9L266.0,175.7L264.5,177.4L267.1,178.3L265.6,179.3ZM257.4,177.4L260.4,177.8L262.9,176.4L263.3,173.2L263.9,170.4L261.9,168.6L259.6,169.9L257.4,171.4L258.1,173.9L256.9,176.1ZM288.7,64.0L293.2,79.0L297.7,84.3L300.6,71.8L305.1,73.3L309.6,64.0L305.1,56.3L296.2,59.8L290.2,60.6ZM349.1,112.9L352.1,116.1L357.3,116.6L355.8,108.1L359.6,100.3L363.3,93.0L370.0,86.9L375.2,82.3L370.8,82.3L361.8,87.5L355.8,94.7L352.9,103.0L349.9,109.0ZM414.0,68.0L421.5,75.5L427.4,71.8L428.9,64.0L421.5,55.4L415.5,52.6ZM342.4,55.4L349.9,60.6L358.8,56.3L361.8,47.8L352.9,48.8L346.9,51.7ZM476.7,91.8L484.1,101.4L490.1,93.5L496.1,94.7L493.1,88.7L481.1,87.5ZM538.6,115.2L543.8,116.1L543.8,112.9L539.3,112.9ZM484.1,171.2L486.1,175.7L485.9,181.6L486.4,187.3L485.6,190.1L484.1,190.5L484.4,185.0L484.1,178.1L483.7,173.2ZM481.6,199.8L482.9,197.8L485.9,198.8L489.3,196.2L487.6,194.8L484.1,191.8L483.4,195.8L481.1,197.6ZM483.1,200.2L484.1,203.8L482.6,206.6L482.6,210.4L481.1,212.2L479.3,212.7L476.7,212.9L474.9,214.9L473.7,213.1L470.7,213.5L467.7,214.0L467.7,212.6L470.0,211.3L472.9,211.1L475.2,210.4L476.7,208.0L478.9,207.6L480.4,205.7L481.1,202.8L481.6,200.6ZM466.2,214.9L468.5,214.6L468.9,216.7L467.7,218.8L466.5,219.0L466.2,216.7ZM470.0,214.4L472.6,213.7L472.9,214.6L470.7,215.8ZM453.5,229.1L454.0,230.3L452.5,234.3L451.6,232.7L452.5,229.8ZM434.4,238.8L437.1,237.5L437.9,238.3L435.6,240.4ZM391.3,253.5L393.4,255.3L394.3,257.5L392.5,259.0L391.3,257.2ZM452.0,239.9L454.6,240.2L454.0,243.8L454.3,246.1L457.3,248.4L456.5,248.9L453.5,247.2L452.2,246.4L451.3,244.1ZM454.3,256.8L456.5,255.1L459.5,253.5L461.0,256.0L460.3,258.6L459.2,259.3L457.3,258.3L456.2,256.8ZM454.3,250.7L456.2,250.9L458.8,251.2L459.5,253.0L456.5,253.8L454.7,252.6ZM447.3,255.3L450.6,252.2L450.3,251.0L447.1,254.8ZM434.9,265.8L436.4,265.5L438.3,264.3L440.9,263.1L443.1,260.8L445.3,258.6L446.8,257.5L449.1,259.8L449.8,260.5L448.0,262.8L448.3,265.0L449.5,266.5L447.6,268.0L447.6,269.5L446.1,271.7L445.6,274.0L443.1,274.0L440.9,272.8L438.6,272.9L436.7,271.7L436.4,269.8L434.9,268.0ZM414.5,259.6L417.7,260.2L420.0,262.8L422.2,264.7L424.5,266.5L426.7,268.0L427.4,269.8L428.9,271.4L430.4,272.5L430.1,276.7L428.2,276.7L425.9,274.7L423.7,272.5L421.9,269.5L420.0,267.3L419.2,265.3L417.0,263.5L414.8,260.8ZM429.2,278.2L431.2,277.0L434.1,277.9L437.6,277.6L440.6,278.3L443.1,279.7L442.8,280.9L439.4,280.6L434.9,279.7L431.2,279.1ZM451.0,266.8L452.8,266.1L455.8,266.7L458.8,265.6L458.0,267.4L453.5,267.4L451.6,269.3L453.5,269.5L456.2,269.2L454.3,271.0L455.5,274.0L454.3,275.5L452.8,273.2L452.0,276.2L450.6,276.2L450.6,273.2L449.5,272.0L450.6,269.5ZM467.7,269.2L470.7,268.7L472.5,269.5L473.7,272.9L477.4,270.4L482.6,271.9L487.9,273.8L490.1,276.2L492.3,277.0L492.8,279.2L494.6,281.5L497.2,283.4L493.1,283.3L490.1,280.7L487.1,279.5L485.6,281.5L482.6,281.8L479.6,280.0L478.2,280.4L479.3,278.2L478.2,276.2L474.4,274.6L470.7,274.0L470.4,272.2L468.5,270.2ZM493.8,276.2L496.8,276.2L499.0,274.3L499.3,275.5L496.8,277.3ZM456.5,283.4L458.8,281.5L461.7,280.6L461.0,281.5L458.0,283.3ZM444.6,280.4L446.8,280.4L449.8,280.6L452.8,280.4L455.8,280.4L455.5,281.2L451.3,281.2L446.8,281.5L444.6,281.0ZM462.5,265.3L464.0,265.8L463.2,268.0L462.8,269.2L462.5,267.3ZM463.2,272.5L467.0,272.5L467.4,273.5L464.0,273.2ZM441.6,301.7L442.7,301.3L446.1,299.4L449.8,298.5L453.5,296.9L454.7,294.1L456.5,294.5L458.0,292.2L460.3,289.1L462.5,289.1L464.7,290.5L465.5,288.3L467.0,286.8L469.2,285.0L470.4,286.0L473.7,286.3L476.4,286.0L475.2,288.3L474.4,290.6L476.7,291.9L479.6,294.1L481.9,294.5L483.4,290.6L483.7,286.8L484.9,284.2L486.4,286.8L486.8,289.6L489.0,290.6L490.1,294.5L491.6,297.4L494.6,299.3L497.1,302.5L500.2,306.5L501.0,309.9L501.3,312.4L500.5,316.7L499.0,319.8L497.5,322.5L496.4,325.6L496.1,328.4L493.1,329.2L490.5,331.3L488.3,329.9L485.6,330.9L482.6,329.7L480.8,327.5L479.9,325.1L478.2,324.7L478.2,321.1L477.7,320.2L476.7,322.9L474.9,323.4L473.7,321.1L472.2,319.8L469.2,318.4L465.5,317.7L461.7,318.8L458.0,320.2L456.5,321.8L452.8,321.6L449.8,322.7L447.6,323.8L444.6,322.7L444.1,321.1L444.9,318.4L444.1,315.8L443.4,312.4L441.9,309.0L441.6,306.5L441.8,304.1ZM488.1,334.6L490.8,335.4L493.4,335.0L493.4,337.6L492.0,339.8L490.1,340.2L489.0,337.8ZM529.9,322.9L532.3,325.3L534.1,326.6L534.8,328.6L537.8,328.8L538.3,330.3L536.6,332.2L536.0,334.2L533.8,336.4L532.9,335.8L533.6,333.6L531.6,331.8L532.9,329.4L532.6,326.6L530.4,324.2ZM529.9,334.2L532.2,336.8L530.4,339.8L528.1,341.7L526.6,345.0L525.1,346.5L522.9,346.5L520.7,345.0L522.9,341.7L525.9,339.2L527.8,336.8ZM284.5,200.8L286.6,200.8L286.6,204.3L285.0,204.7ZM285.1,197.8L286.3,196.8L286.5,199.2L285.4,199.8ZM290.9,206.6L295.4,206.3L295.0,208.9L290.9,207.4ZM307.4,211.3L311.4,211.8L308.1,212.2ZM320.5,212.2L323.8,211.1L322.3,212.7ZM516.9,298.8L519.2,299.6L521.4,302.1L519.2,301.3ZM536.8,294.5L538.7,294.4L538.6,295.6L536.9,295.5ZM39.6,237.2L41.1,237.9L40.2,239.1L39.6,238.2Z" fill="#dedede" stroke="#dedede" stroke-width="0.6" stroke-linejoin="round"/><path d="M342.4,192.7L345.4,189.5L349.1,188.4L351.4,189.5L351.4,192.7L348.4,193.7L347.3,196.8L349.9,197.8L351.4,200.8L352.9,203.8L352.6,208.0L349.9,209.1L346.9,207.8L345.4,205.7L346.1,201.8L343.9,198.8L343.2,195.8Z" fill="#fdfdfd"/></svg>
<div class="b" style="left:2167px;top:792px;width:34px;height:34px;background:#e5813b;border-radius:50%;"></div>
<div class="b" style="left:2352.8px;top:810.8px;width:12.4px;height:12.4px;background:#e5813b;border-radius:50%;"></div>
<div class="b" style="left:2493.2px;top:850.5px;width:5.0px;height:5.0px;background:#e5813b;border-radius:50%;"></div>
<div class="b" style="left:2257.4px;top:919.3px;width:4.4px;height:4.4px;background:#e5813b;border-radius:50%;"></div>
<div class="b" style="left:446px;top:1146px;width:2354px;height:460px;border:2px solid #dbe2ea;border-radius:9px;background:#fdfdfd;overflow:hidden;"></div>
<div class="t" style="left:502.32px;top:1184.15px;font-size:40.58px;font-weight:700;color:#3d5180;letter-spacing:-0.933px;">Event</div>
<svg class="b" style="left:2680px;top:1168px;" width="70" height="70" viewBox="0 0 70 70"><path d="M35,12.500 V41 M22.600,30.750 L35,43.100 L47.400,30.750" fill="none" stroke="#306ccc" stroke-width="6"/><path d="M14.650,44.500 V53.500 L17.500,56.300 H52.500 L55.350,53.500 V44.500" fill="none" stroke="#306ccc" stroke-width="5.400"/></svg>
<div class="t" style="left:507.71px;top:1315.92px;font-size:26.09px;font-weight:700;color:#212121;letter-spacing:0.661px;">TIME</div>
<div class="t" style="left:715.78px;top:1290.92px;font-size:26.09px;font-weight:700;color:#212121;letter-spacing:0.295px;">RISK</div>
<div class="t" style="left:716.77px;top:1338.92px;font-size:26.09px;font-weight:700;color:#212121;letter-spacing:-1.192px;">SCORE</div>
<div class="t" style="left:921.87px;top:1290.92px;font-size:26.09px;font-weight:700;color:#212121;letter-spacing:-0.571px;">ANOMALY</div>
<div class="t" style="left:921.77px;top:1338.92px;font-size:26.09px;font-weight:700;color:#212121;letter-spacing:-1.004px;">SCORE</div>
<div class="t" style="left:1163.28px;top:1315.92px;font-size:26.09px;font-weight:700;color:#212121;letter-spacing:-0.248px;">EVENT</div>
<div class="t" style="left:1373.37px;top:1315.92px;font-size:26.09px;font-weight:700;color:#212121;letter-spacing:-0.479px;">APPLICATION</div>
<div class="t" style="left:1657.87px;top:1315.92px;font-size:26.09px;font-weight:700;color:#212121;letter-spacing:-0.575px;">ACCOUNT</div>
<div class="t" style="left:2280.28px;top:1315.92px;font-size:26.09px;font-weight:700;color:#212121;letter-spacing:-0.586px;">LOCATION</div>
<div class="t" style="left:2525.08px;top:1315.92px;font-size:26.09px;font-weight:700;color:#212121;letter-spacing:-0.237px;">DEVICE</div>
<div class="b" style="left:2700px;top:1300px;width:98px;height:60px;overflow:hidden;">
<div class="t" style="left:37.87px;top:15.92px;font-size:26.09px;font-weight:700;color:#212121;letter-spacing:-0.201px;">SIGNALS</div>
</div>
<div class="b" style="left:448px;top:1396px;width:2350px;height:2px;background:#dfe3e8;"></div>
<div class="b" style="left:448px;top:1556.5px;width:2350px;height:2px;background:#e0e0e0;"></div>
<div class="t" style="left:507.76px;top:1465.11px;font-size:23.50px;font-weight:400;color:#212121;letter-spacing:0.476px;">an hour ago</div>
<div class="t" style="left:762.75px;top:1454.81px;font-size:42.75px;font-weight:400;color:#212121;letter-spacing:-2.954px;">18</div>
<div class="t" style="left:986.91px;top:1454.81px;font-size:42.75px;font-weight:400;color:#212121;letter-spacing:2.184px;">87</div>
<svg class="b" style="left:1166px;top:1437px;" width="44" height="44" viewBox="0 0 44 44"><circle cx="22" cy="22" r="18.200" fill="none" stroke="#e8602c" stroke-width="3.600"/><path d="M9.500,34.500 L34.500,9.500" stroke="#e8602c" stroke-width="3.600"/></svg>
<div class="t" style="left:1228.28px;top:1442.92px;font-size:26.09px;font-weight:700;color:#212121;letter-spacing:0.464px;">Login</div>
<div class="t" style="left:1228.28px;top:1484.92px;font-size:26.09px;font-weight:700;color:#212121;letter-spacing:1.010px;">Failed</div>
<div class="t" style="left:1372.88px;top:1463.91px;font-size:25.80px;font-weight:400;color:#212121;letter-spacing:1.874px;">Demo</div>
<svg class="b" style="left:1654.25px;top:1457px;" width="40" height="40" viewBox="0 0 24 24"><path fill="#17212b" d="M3 5v14c0 1.100.890 2 2 2h14c1.100 0 2-.900 2-2V5c0-1.100-.900-2-2-2H5c-1.110 0-2 .900-2 2zm12 4c0 1.660-1.340 3-3 3s-3-1.340-3-3 1.340-3 3-3 3 1.340 3 3zm-9 8c0-2 4-3.100 6-3.100s6 1.100 6 3.100v1H6v-1z"/></svg>
<div class="t" style="left:1730.16px;top:1445.49px;font-size:26.00px;font-weight:400;color:#1f1f1f;letter-spacing:1.205px;">dosia.friedenberger@aol.com</div>
<div class="t" style="left:1730.28px;top:1486.78px;font-size:23.00px;font-weight:400;color:#7b8794;letter-spacing:0.660px;">dosia.friedenberger@aol.com</div>
<svg class="b" style="left:2280.75px;top:1470px;" width="21.5" height="14.5" viewBox="0 0 22 16"><rect width="22" height="16" fill="#c8202f"/><rect x="6" width="4" height="16" fill="#fff"/><rect y="6" width="22" height="4" fill="#fff"/><rect x="7" width="2" height="16" fill="#2a4b9b"/><rect y="7" width="22" height="2" fill="#2a4b9b"/></svg>
<div class="t" style="left:2318.08px;top:1428.03px;font-size:25.36px;font-weight:700;color:#212121;letter-spacing:1.388px;">Norway</div>
<div class="t" style="left:2317.91px;top:1468.98px;font-size:22.46px;font-weight:400;color:#212121;letter-spacing:1.592px;">Lillehammer,</div>
<div class="t" style="left:2317.68px;top:1504.73px;font-size:22.46px;font-weight:400;color:#212121;letter-spacing:1.661px;">Innlandet</div>
<div class="t" style="left:2525.95px;top:1445.92px;font-size:26.09px;font-weight:700;color:#212121;letter-spacing:-0.441px;">iOS 18.0.1</div>
<div class="t" style="left:2526.72px;top:1486.93px;font-size:22.83px;font-weight:400;color:#212121;letter-spacing:-0.504px;">Safari 18.0.1</div>
<div class="b" style="left:2730px;top:1405px;width:68px;height:140px;overflow:hidden;">
<div class="b" style="left:7.75px;top:8.75px;width:160px;height:52px;background:#e0e2e5;border-radius:26px;"></div>
<div class="b" style="left:7.75px;top:80px;width:160px;height:52px;background:#e0e2e5;border-radius:26px;"></div>
<div class="t" style="left:32.18px;top:24.38px;font-size:19.93px;font-weight:700;color:#1a1a1a;letter-spacing:0.000px;">Improbable</div>
<div class="t" style="left:32.18px;top:95.73px;font-size:19.93px;font-weight:700;color:#1a1a1a;letter-spacing:0.000px;">New Device</div>
</div>
<div class="b" style="left:0px;top:128px;width:367px;height:1436px;background:#fdfdfd;"></div>
<div class="b" style="left:366px;top:128px;width:2px;height:1436px;background:#ececec;"></div>
<div class="b" style="left:368px;top:128px;width:27px;height:1436px;background:#fafafa;"></div>
<div class="b" style="left:394px;top:128px;width:1.7px;height:1436px;background:#f1f1f1;"></div>
<div class="b" style="left:395.7px;top:128px;width:2px;height:1436px;background:#e3e3e3;"></div>
<div class="b" style="left:374px;top:100px;width:16px;height:1324px;background:#c1c1c1;border-radius:8px;"></div>
<svg class="b" style="left:30px;top:216px;" width="48" height="48" viewBox="0 0 24 24"><path fill="#4f6073" d="M19 5v2h-4V5h4M9 5v6H5V5h4m10 8v6h-4v-6h4M9 17v2H5v-2h4M21 3h-8v6h8V3zM11 3H3v10h8V3zm10 8h-8v10h8V11zm-10 4H3v6h8v-6z"/></svg>
<div class="t" style="left:109.50px;top:224.24px;font-size:30.43px;font-weight:400;color:#3d4b5d;letter-spacing:1.382px;">Dashboard</div>
<div class="b" style="left:34.500px;top:332px;width:38.800px;height:38.800px;border-radius:3.500px;background:linear-gradient(135deg,#52b8ea 0%,#3a84b4 45%,#2a5587 75%,#1d2c60 100%);"></div>
<svg class="b" style="left:34.5px;top:332px;" width="38.8" height="38.8" viewBox="0 0 38.8 38.8"><path fill="#fff" d="M22.9,10.899999999999999 Q25.2,17.099999999999998 31.7,19.4 Q25.2,21.7 22.9,27.9 Q20.599999999999998,21.7 14.099999999999998,19.4 Q20.599999999999998,17.099999999999998 22.9,10.899999999999999 Z"/><path fill="#2f6b9c" d="M22.9,16.099999999999998 Q23.7,18.599999999999998 26.2,19.4 Q23.7,20.2 22.9,22.7 Q22.099999999999998,20.2 19.599999999999998,19.4 Q22.099999999999998,18.599999999999998 22.9,16.099999999999998 Z"/><path fill="#fff" d="M11.8,6.8999999999999995 Q12.9,10.1 16.1,11.2 Q12.9,12.299999999999999 11.8,15.5 Q10.700000000000001,12.299999999999999 7.500000000000001,11.2 Q10.700000000000001,10.1 11.8,6.8999999999999995 Z"/><path fill="#fff" d="M11.8,22.9 Q12.9,26.099999999999998 16.1,27.2 Q12.9,28.3 11.8,31.5 Q10.700000000000001,28.3 7.500000000000001,27.2 Q10.700000000000001,26.099999999999998 11.8,22.9 Z"/></svg>
<div class="t" style="left:110.88px;top:336.85px;font-size:29.71px;font-weight:400;color:#3d4b5d;letter-spacing:0.256px;">Vera AI</div>
<div class="b" style="left:234px;top:332px;width:100px;height:40px;background:#dde1e9;border-radius:20px;"></div>
<div class="t" style="left:258.47px;top:340.37px;font-size:23.19px;font-weight:700;color:#3d5180;letter-spacing:0.040px;">Beta</div>
<div class="t" style="left:30.09px;top:439.46px;font-size:28.99px;font-weight:700;color:#1f1f1f;letter-spacing:-0.956px;">INVESTIGATE</div>
<svg class="b" style="left:30px;top:532px;" width="48" height="48" viewBox="0 0 48 48"><rect x="6" y="6" width="36" height="36" rx="3" fill="none" stroke="#4f6073" stroke-width="4"/>
<path d="M6,30.500 H17.800 A6.200,4.600 0 0 0 30.200,30.500 H42" fill="none" stroke="#4f6073" stroke-width="4"/><path fill="#4f6073" d="M23.7,8.8 Q26.599999999999998,16.400000000000002 34.4,19.3 Q26.599999999999998,22.2 23.7,29.8 Q20.8,22.2 13.0,19.3 Q20.8,16.400000000000002 23.7,8.8 Z"/><path fill="#fdfdfd" d="M23.7,14.9 Q24.8,18.2 28.1,19.3 Q24.8,20.400000000000002 23.7,23.700000000000003 Q22.599999999999998,20.400000000000002 19.299999999999997,19.3 Q22.599999999999998,18.2 23.7,14.9 Z"/></svg>
<div class="t" style="left:109.33px;top:541.24px;font-size:30.43px;font-weight:400;color:#3d4b5d;letter-spacing:1.099px;">Threats</div>
<div class="b" style="left:247px;top:536px;width:87px;height:40px;background:#306ccc;border-radius:7px;"></div>
<div class="t" style="left:270.15px;top:544.60px;font-size:21.74px;font-weight:700;color:#fff;letter-spacing:1.978px;">180</div>
<svg class="b" style="left:30px;top:629px;" width="48" height="48" viewBox="0 0 24 24"><path fill="#4f6073" d="M9 13.750c-2.340 0-7 1.170-7 3.500V19h14v-1.750c0-2.330-4.660-3.500-7-3.500zM4.340 17c.840-.580 2.870-1.250 4.660-1.250s3.820.670 4.660 1.250H4.340zM9 12c1.930 0 3.500-1.570 3.500-3.500S10.930 5 9 5 5.500 6.570 5.500 8.500 7.070 12 9 12zm0-5c.830 0 1.500.670 1.500 1.500S9.830 10 9 10s-1.500-.670-1.500-1.500S8.170 7 9 7zm7.040 6.810c1.160.840 1.960 1.960 1.960 3.440V19h4v-1.750c0-2.020-3.500-3.170-5.960-3.440zM15 12c1.930 0 3.500-1.570 3.500-3.500S16.930 5 15 5c-.540 0-1.040.130-1.500.350.630.890 1 1.980 1 3.150s-.370 2.260-1 3.150c.460.220.960.350 1.500.350z"/></svg>
<div class="t" style="left:110.94px;top:637.85px;font-size:29.71px;font-weight:400;color:#3d4b5d;letter-spacing:1.847px;">Accounts</div>
<svg class="b" style="left:30px;top:725px;" width="48" height="48" viewBox="0 0 24 24"><path fill="#306ccc" d="M12 2C6.480 2 2 6.480 2 12s4.480 10 10 10 10-4.480 10-10S17.520 2 12 2zm0 18c-4.410 0-8-3.590-8-8s3.590-8 8-8 8 3.590 8 8-3.590 8-8 8zm-5.500-2.500l7.510-3.490L17.500 6.500 9.990 9.990 6.500 17.500zm5.500-6.600c.610 0 1.100.490 1.100 1.100s-.490 1.100-1.100 1.100-1.100-.490-1.100-1.100.490-1.100 1.100-1.100z"/></svg>
<div class="t" style="left:109.56px;top:733.85px;font-size:29.71px;font-weight:400;color:#2f6bcd;letter-spacing:1.324px;">Explorer</div>
<svg class="b" style="left:30px;top:824px;" width="48" height="48" viewBox="0 0 24 24"><path fill="#4f6073" d="M17.810 4.470c-.080 0-.160-.020-.230-.060C15.660 3.420 14 3 12.010 3c-1.980 0-3.860.470-5.570 1.410-.240.130-.540.040-.680-.200-.130-.240-.040-.550.200-.680C7.820 2.520 9.860 2 12.010 2c2.130 0 3.990.470 6.030 1.520.250.130.340.430.210.670-.090.180-.260.280-.440.280zM3.500 9.720c-.100 0-.200-.030-.290-.090-.230-.160-.280-.470-.120-.700.990-1.400 2.250-2.500 3.750-3.270C9.980 4.040 14 4.030 17.150 5.650c1.500.770 2.760 1.860 3.750 3.250.160.220.110.540-.120.700-.230.160-.540.110-.700-.120-.900-1.260-2.040-2.250-3.390-2.940-2.870-1.470-6.540-1.470-9.400.010-1.360.700-2.500 1.700-3.400 2.960-.080.140-.230.210-.390.210zm6.250 12.070c-.130 0-.260-.050-.350-.150-.870-.870-1.340-1.430-2.010-2.640-.690-1.230-1.050-2.730-1.050-4.340 0-2.970 2.540-5.390 5.660-5.390s5.660 2.420 5.660 5.390c0 .280-.220.500-.500.500s-.500-.220-.500-.500c0-2.420-2.090-4.390-4.660-4.390-2.570 0-4.660 1.970-4.660 4.390 0 1.440.320 2.770.930 3.850.640 1.150 1.080 1.640 1.850 2.420.190.200.190.510 0 .710-.110.100-.240.150-.370.150zm7.170-1.850c-1.190 0-2.240-.300-3.100-.890-1.490-1.010-2.380-2.650-2.380-4.390 0-.280.220-.500.500-.500s.500.220.500.500c0 1.410.720 2.740 1.940 3.560.710.480 1.540.710 2.540.710.240 0 .640-.030 1.040-.100.270-.050.530.130.580.410.050.270-.130.530-.410.580-.570.110-1.070.120-1.210.120zM14.910 22c-.040 0-.090-.010-.130-.020-1.590-.440-2.630-1.030-3.720-2.100-1.400-1.390-2.170-3.240-2.170-5.220 0-1.620 1.380-2.940 3.080-2.940 1.700 0 3.080 1.320 3.080 2.940 0 1.070.930 1.940 2.080 1.940s2.080-.870 2.080-1.940c0-3.770-3.250-6.830-7.250-6.830-2.840 0-5.440 1.580-6.610 4.030-.390.810-.590 1.760-.590 2.800 0 .780.070 2.010.670 3.610.100.260-.030.550-.290.640-.260.100-.550-.040-.640-.290-.490-1.310-.730-2.610-.730-3.960 0-1.200.230-2.290.680-3.240 1.330-2.790 4.280-4.600 7.510-4.600 4.550 0 8.250 3.510 8.250 7.830 0 1.620-1.380 2.940-3.080 2.940s-3.080-1.320-3.080-2.940c0-1.070-.930-1.940-2.080-1.940s-2.080.870-2.080 1.940c0 1.710.660 3.310 1.870 4.510.950.940 1.860 1.460 3.270 1.850.270.070.420.350.350.610-.050.230-.260.380-.470.380z"/></svg>
<div class="t" style="left:109.63px;top:835.24px;font-size:30.43px;font-weight:400;color:#3d4b5d;letter-spacing:1.590px;">SignalPrint</div>
<div class="t" style="left:280.24px;top:826.19px;font-size:11.59px;font-weight:400;color:#3d4b5d;letter-spacing:1.964px;">TM</div>
<div class="t" style="left:30.13px;top:955.08px;font-size:28.26px;font-weight:700;color:#1f1f1f;letter-spacing:-0.971px;">PREVENT</div>
<svg class="b" style="left:30px;top:1048px;" width="48" height="48" viewBox="0 0 24 24"><path fill="#4f6073" d="M4 10.500c-.830 0-1.500.670-1.500 1.500s.670 1.500 1.500 1.500 1.500-.670 1.500-1.500-.670-1.500-1.500-1.500zm0-6c-.830 0-1.500.670-1.500 1.500S3.170 7.500 4 7.500 5.500 6.830 5.500 6 4.830 4.500 4 4.500zm0 12c-.830 0-1.500.680-1.500 1.500s.680 1.500 1.500 1.500 1.500-.680 1.500-1.500-.670-1.500-1.500-1.500zM7 19h14v-2H7v2zm0-6h14v-2H7v2zm0-8v2h14V5H7z"/></svg>
<div class="t" style="left:109.50px;top:1056.24px;font-size:30.43px;font-weight:400;color:#3d4b5d;letter-spacing:1.879px;">Lists</div>
<svg class="b" style="left:30px;top:1144px;" width="48" height="48" viewBox="0 0 24 24"><path fill="#4f6073" d="M16.540 11L13 7.460l1.410-1.410 2.120 2.120 4.240-4.240 1.410 1.410L16.540 11zM11 7H2v2h9V7zm10 6.410L19.590 12 17 14.590 14.410 12 13 13.410 15.590 16 13 18.590 14.410 20 17 17.410 19.590 20 21 18.590 18.410 16 21 13.410zM11 15H2v2h9v-2z"/></svg>
<div class="t" style="left:110.88px;top:1152.85px;font-size:29.71px;font-weight:400;color:#3d4b5d;letter-spacing:1.841px;">Workflows</div>
<svg class="b" style="left:30px;top:1240px;" width="48" height="48" viewBox="0 0 48 48"><circle cx="24" cy="24" r="18" fill="none" stroke="#4f6073" stroke-width="4"/>
<circle cx="24" cy="24" r="10" fill="none" stroke="#4f6073" stroke-width="4"/>
<circle cx="24" cy="24" r="3.700" fill="#4f6073"/>
<path d="M24,24 L37,37" stroke="#4f6073" stroke-width="4" fill="none"/></svg>
<div class="t" style="left:109.56px;top:1248.85px;font-size:29.71px;font-weight:400;color:#3d4b5d;letter-spacing:2.438px;">Monitors</div>
<div class="b" style="left:0px;top:1344px;width:367px;height:2px;background:#dcdfe3;"></div>
<div class="t" style="left:29.81px;top:1385.46px;font-size:28.99px;font-weight:700;color:#1f1f1f;letter-spacing:-1.683px;">GET HELP</div>
<svg class="b" style="left:30px;top:1479px;" width="48" height="48" viewBox="0 0 24 24"><path fill="#4f6073" d="M8 16h8v2H8zm0-4h8v2H8zm6-10H6c-1.100 0-2 .900-2 2v16c0 1.100.890 2 1.990 2H18c1.100 0 2-.900 2-2V8l-6-6zm4 18H6V4h7v5h5v11z"/><path d="M12.500,3 L19,9.500 L12.500,9.500 Z" fill="#4f6073"/></svg>
<div class="t" style="left:109.50px;top:1487.24px;font-size:30.43px;font-weight:400;color:#3d4b5d;letter-spacing:2.062px;">Documentation</div>
<div class="b" style="left:0px;top:0px;width:2848px;height:128px;background:#192646;box-shadow:0 2px 5px rgba(0,0,0,.5);"></div>
<div class="b" style="left:44px;top:52px;width:36px;height:4px;background:#fff;"></div>
<div class="b" style="left:44px;top:62px;width:36px;height:4px;background:#fff;"></div>
<div class="b" style="left:44px;top:72px;width:36px;height:4px;background:#fff;"></div>
<svg class="b" style="left:134px;top:30px;" width="60" height="68" viewBox="0 0 60 68">
<path d="M29.700,0 L57.800,12.300 Q59.600,13.100 59.500,15 C59,40 48.500,58 29.700,68 C11,58 0.500,40 0,15 Q-0.100,13.100 1.700,12.300 Z" fill="#fff"/>
<path d="M29.700,9.800 L51.600,18.700 C51,38 43.500,51 29.700,58.300 C16,51 8.900,38 8.300,18.700 Z" fill="#192646"/>
<path d="M19.100,40.200 L25,36 L29.700,40.600 C34.500,35 38,28 39.800,20.600 L46.400,23.800 C44,35 38,45 29.700,51.800 C25.500,48.500 22,44.500 19.100,40.200 Z" fill="#5ac8fa"/>
<path d="M13.500,23.800 L20.100,20.900 L23.200,30.900 L16.600,34.600 Z" fill="#fff"/>
</svg>
<div class="t" style="left:210.75px;top:48.42px;font-size:42.03px;font-weight:700;color:#fff;letter-spacing:2.403px;">VEROSINT</div>
<div class="t" style="left:2411.87px;top:50.78px;font-size:33.33px;font-weight:400;color:#fff;letter-spacing:-1.056px;-webkit-text-stroke:0.9px #fff;">Verosint SE Demo</div>
<div class="b" style="left:2704.5px;top:48px;width:3px;height:38px;background:#fff;"></div>
<svg class="b" style="left:2744px;top:44px;" width="48" height="48" viewBox="0 0 24 24"><path fill="#fff" d="M12 2C6.480 2 2 6.480 2 12s4.480 10 10 10 10-4.480 10-10S17.520 2 12 2zm0 3c1.660 0 3 1.340 3 3s-1.340 3-3 3-3-1.340-3-3 1.340-3 3-3zm0 14.200c-2.500 0-4.710-1.280-6-3.220.030-1.990 4-3.080 6-3.080 1.990 0 5.970 1.090 6 3.080-1.290 1.940-3.500 3.220-6 3.220z"/></svg>
<div class="b" style="left:2848px;top:0px;width:30px;height:1564px;background:#fafafa;"></div>
<div class="b" style="left:2846px;top:128px;width:2px;height:1436px;background:#e2e2e2;"></div>
<div class="b" style="left:2848px;top:128px;width:2px;height:1436px;background:#eeeeee;"></div>
<div class="b" style="left:2848px;top:0px;width:2px;height:128px;background:#f0f0f0;"></div>
<div class="b" style="left:2856px;top:20px;width:16px;height:400px;background:#c1c1c1;border-radius:8px;"></div>
<svg class="b" style="left:0px;top:1524px;" width="60" height="40" viewBox="0 0 60 40"><path d="M0,10 C1.500,24 10,36 36,40 L0,40 Z" fill="#1d2731"/><path d="M0,10 C1.500,24 10,36 36,40" fill="none" stroke="#0c0c0c" stroke-width="2"/></svg>
<svg class="b" style="left:2818px;top:1516px;" width="60" height="48" viewBox="0 0 60 48"><path d="M60,8 C59,29 50,44 5,48 L60,48 Z" fill="#1a2027"/></svg>
</body></html>
